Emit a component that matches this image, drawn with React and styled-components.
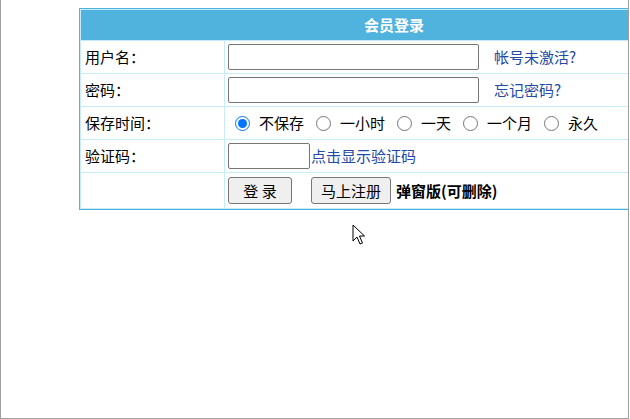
import React from 'react'
import styled, { createGlobalStyle } from 'styled-components'

const GlobalStyle = createGlobalStyle`
  html, body {
    margin: 0;
    padding: 0;
    background: #fff;
  }
  body {
    font-family: "Noto Sans CJK SC", "Noto Sans", sans-serif;
  }
`

const Frame = styled.div`
  position: relative;
  box-sizing: border-box;
  width: 629px;
  height: 419px;
  border: 1px solid #a0a0a0;
  border-top: none;
  overflow: hidden;
  padding: 8px 0 0 78px;
`

const LoginTable = styled.div`
  width: 626px;
  display: grid;
  grid-template-columns: 143px 1fr;
  grid-template-rows: 30px repeat(4, 32px) 35px;
  gap: 1px;
  padding: 1px;
  background: #c7ecf9;
  border: 1px solid #4fb3de;
  font-size: 15px;
  line-height: 1.2;
  color: #000;
`

const Header = styled.div`
  grid-column: 1 / span 2;
  background: #4fb3de;
  color: #fff;
  font-weight: bold;
  display: flex;
  align-items: center;
  justify-content: center;
`

const Label = styled.div`
  background: #fff;
  display: flex;
  align-items: center;
  padding-left: 4px;
`

const Field = styled.div`
  background: #fff;
  display: flex;
  align-items: center;
  padding-left: 3px;
  white-space: nowrap;
`

const TextInput = styled.input`
  box-sizing: border-box;
  width: ${p => p.$w}px;
  height: 26px;
  border: 1px solid #767676;
  border-radius: 2px;
  padding: 1px 3px;
  font-size: 14px;
  background: #fff;
  outline: none;
`

const Link = styled.a`
  color: #224aa8;
  text-decoration: none;
  margin-left: ${p => p.$gap || 0}px;
  cursor: pointer;
`

const Options = styled.div`
  display: flex;
  align-items: center;
  gap: 12px;
  padding-left: 7px;
`

const Option = styled.label`
  display: flex;
  align-items: center;
  gap: 9px;
`

const Radio = styled.input`
  width: 15px;
  height: 15px;
  margin: 0;
  accent-color: #0075ff;
`

const Button = styled.button`
  box-sizing: border-box;
  height: 27px;
  width: ${p => p.$w}px;
  padding: 0;
  margin-right: ${p => p.$gap || 0}px;
  border: 1px solid #767676;
  border-radius: 3px;
  background: #efefef;
  font-family: inherit;
  font-size: 15px;
  color: #000;
`

const Note = styled.b`
  margin-left: 5px;
`

const Pointer = styled.svg`
  position: absolute;
  left: 351px;
  top: 224px;
`

const keepTimes = ['不保存', '一小时', '一天', '一个月', '永久']

function App() {
    return (
        <Frame>
            <GlobalStyle />
            <LoginTable>
                <Header>会员登录</Header>

                <Label>用户名：</Label>
                <Field>
                    <TextInput $w={251} />
                    <Link $gap={15}>帐号未激活?</Link>
                </Field>

                <Label>密码：</Label>
                <Field>
                    <TextInput $w={251} type="password" />
                    <Link $gap={15}>忘记密码?</Link>
                </Field>

                <Label>保存时间：</Label>
                <Field>
                    <Options>
                        {keepTimes.map((t, i) => (
                            <Option key={t}>
                                <Radio type="radio" name="keep" defaultChecked={i === 0} />
                                {t}
                            </Option>
                        ))}
                    </Options>
                </Field>

                <Label>验证码：</Label>
                <Field>
                    <TextInput $w={82} />
                    <Link $gap={1}>点击显示验证码</Link>
                </Field>

                <Label />
                <Field>
                    <Button $w={64} $gap={19}>登 录</Button>
                    <Button $w={80}>马上注册</Button>
                    <Note>弹窗版(可删除)</Note>
                </Field>
            </LoginTable>

            {/* mouse pointer in the shot */}
            <Pointer width="14" height="22" viewBox="0 0 14 22">
                <path d="M1 1 L1 17 L5 13 L8 20 L10.5 19 L7.5 12 L12.5 12 Z" fill="#fff" stroke="#000" strokeWidth="1" strokeLinejoin="miter" />
            </Pointer>
        </Frame>
    )
}

export default App
